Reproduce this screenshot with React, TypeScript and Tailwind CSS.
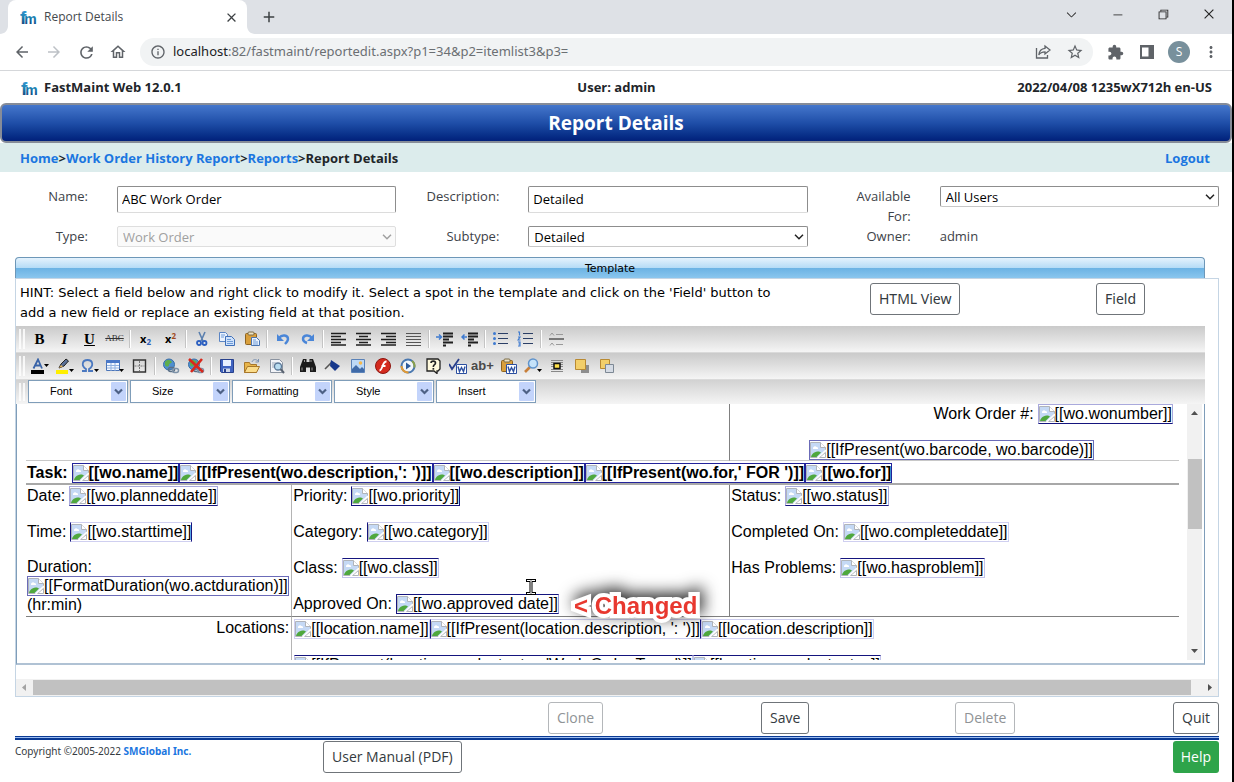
import type { ReactNode } from 'react'
import {
  MdArrowBack,
  MdArrowForward,
  MdClose,
  MdExtension,
  MdAdd,
  MdInfoOutline,
  MdMoreVert,
  MdOutlineHome,
  MdRefresh,
  MdStarBorder,
} from 'react-icons/md'
import {
  VscChevronDown,
  VscChromeClose,
  VscChromeMinimize,
  VscChromeRestore,
} from 'react-icons/vsc'

function Logo() {
  return (
    <svg width="18" height="20" viewBox="0 0 18 20" aria-label="fm">
      <defs>
        <linearGradient id="fm" x1="0" y1="0" x2="0" y2="1">
          <stop offset="0" stopColor="#3fa4e6" />
          <stop offset="0.5" stopColor="#1d7fb0" />
          <stop offset="1" stopColor="#0f2f70" />
        </linearGradient>
      </defs>
      <text
        x="0"
        y="17"
        fill="url(#fm)"
        fontFamily="Liberation Sans, sans-serif"
        fontWeight="700"
      >
        <tspan fontSize="19">f</tspan>
        <tspan fontSize="14" dx="-2">
          m
        </tspan>
      </text>
    </svg>
  )
}

function ChromeButton({ label, children }: { label: string; children: ReactNode }) {
  return (
    <button
      aria-label={label}
      className="flex h-7 w-8 shrink-0 items-center justify-center text-[#5f6368]"
    >
      {children}
    </button>
  )
}

function WindowButton({ label, children }: { label: string; children: ReactNode }) {
  return (
    <button
      aria-label={label}
      className="flex h-7 w-[46px] items-center justify-center text-[#222]"
    >
      {children}
    </button>
  )
}

function BrowserChrome() {
  return (
    <div className="border-b border-[#d5d7da]">
      <div className="flex h-[34px] justify-between bg-[#dee1e6]">
        <div className="flex items-end">
          <svg width="8" height="8" viewBox="0 0 8 8">
            <path d="M8 0v8H0c4.400 0 8-3.600 8-8z" fill="#fff" />
          </svg>
          <div className="flex h-[34px] w-[239px] items-center justify-between rounded-t-lg bg-white pr-2 pl-3">
            <div className="flex items-center gap-[6px]">
              <Logo />
              <span className="text-xs text-[#45494d]">Report Details</span>
            </div>
            <button aria-label="Close tab" className="text-[#3c4043]">
              <MdClose size={15} />
            </button>
          </div>
          <svg width="8" height="8" viewBox="0 0 8 8">
            <path d="M0 0v8h8C3.600 8 0 4.400 0 0z" fill="#fff" />
          </svg>
          <button
            aria-label="New tab"
            className="flex h-[34px] w-7 items-center justify-center text-[#3c4043]"
          >
            <MdAdd size={18} />
          </button>
        </div>
        <div className="flex">
          <WindowButton label="Search tabs">
            <VscChevronDown size={15} />
          </WindowButton>
          <WindowButton label="Minimize">
            <VscChromeMinimize size={13} />
          </WindowButton>
          <WindowButton label="Restore">
            <VscChromeRestore size={14} />
          </WindowButton>
          <WindowButton label="Close">
            <VscChromeClose size={14} />
          </WindowButton>
        </div>
      </div>

      <div className="flex h-9 items-center bg-white pr-[5px] pl-[6px]">
        <ChromeButton label="Back">
          <MdArrowBack size={18} />
        </ChromeButton>
        <ChromeButton label="Forward">
          <MdArrowForward size={18} className="text-[#bdc1c6]" />
        </ChromeButton>
        <ChromeButton label="Reload">
          <MdRefresh size={19} />
        </ChromeButton>
        <ChromeButton label="Home">
          <MdOutlineHome size={18} />
        </ChromeButton>
        <div className="mx-[6px] flex h-7 flex-1 items-center rounded-full bg-[#f1f3f4] pr-[2px] pl-[10px]">
          <MdInfoOutline size={16} className="text-[#5f6368]" />
          <span className="ml-[7px] flex-1 font-[Noto_Sans] text-[13px] text-[#6b6f73]">
            <span className="text-[#202124]">localhost</span>
            :82/fastmaint/reportedit.aspx?p1=34&amp;p2=itemlist3&amp;p3=
          </span>
          <ChromeButton label="Share">
            <svg
              width="16"
              height="16"
              viewBox="0 0 16 16"
              fill="none"
              stroke="currentColor"
              strokeWidth="1.3"
            >
              <path d="M1.500 4v10h11v-3" />
              <path d="M10 2l5 4-5 4V7.800C7 7.800 5 8.800 3.800 11 4.200 7 6.300 4.600 10 4.300z" />
            </svg>
          </ChromeButton>
          <ChromeButton label="Bookmark">
            <MdStarBorder size={18} />
          </ChromeButton>
        </div>
        <ChromeButton label="Extensions">
          <MdExtension size={17} />
        </ChromeButton>
        <ChromeButton label="Side panel">
          <svg width="14" height="14" viewBox="0 0 14 14">
            <path d="M0 0h14v14H0zM2 2.500v9h6.500v-9z" fill="currentColor" fillRule="evenodd" />
          </svg>
        </ChromeButton>
        <ChromeButton label="Profile">
          <span className="flex size-[22px] items-center justify-center rounded-full bg-[#78909c] text-xs text-white">
            S
          </span>
        </ChromeButton>
        <ChromeButton label="Menu">
          <MdMoreVert size={18} />
        </ChromeButton>
      </div>
    </div>
  )
}

function PageHeader() {
  return (
    <header className="text-[13px] font-bold text-[#212529]">
      <div className="grid h-8 grid-cols-3 items-center pt-[2px] pr-5 pl-[21px]">
        <div className="flex items-center gap-[5px]">
          <Logo />
          FastMaint Web 12.0.1
        </div>
        <div className="text-center">User: admin</div>
        <div className="text-right">2022/04/08 1235wX712h en-US</div>
      </div>
      <h1 className="flex h-10 items-center justify-center rounded-md border-2 border-[#868c98] bg-linear-to-b from-[#4577cc] via-[#1f4ea8] to-[#02207a] text-[19px] text-white">
        Report Details
      </h1>
      <nav className="flex h-[29px] items-center justify-between bg-[#dcecec] pt-[2px] pr-[22px] pl-5">
        <div>
          <a href="#home" className="text-[#1b76e0]">
            Home
          </a>
          &gt;
          <a href="#history" className="text-[#1b76e0]">
            Work Order History Report
          </a>
          &gt;
          <a href="#reports" className="text-[#1b76e0]">
            Reports
          </a>
          &gt;Report Details
        </div>
        <a href="#logout" className="text-[#1b76e0]">
          Logout
        </a>
      </nav>
    </header>
  )
}

function FormRow({ id, label, children }: { id: string; label: string; children: ReactNode }) {
  return (
    <div className="flex items-start pr-[15px]">
      <label
        htmlFor={id}
        className="w-[88px] shrink-0 pl-3 text-right leading-5 text-[#3d4248]"
      >
        {label}
      </label>
      <div className="ml-[29px] flex-1">{children}</div>
    </div>
  )
}

function TextInput({ id, value }: { id: string; value: string }) {
  return (
    <input
      id={id}
      type="text"
      defaultValue={value}
      className="block h-[27px] w-full rounded-xs border border-[#8d8d8d] border-b-[#dcdcdc] bg-white px-1 pb-[2px] text-black"
    />
  )
}

function SelectInput({ id, value, disabled }: { id: string; value: string; disabled?: boolean }) {
  return (
    <div className="relative">
      <select
        id={id}
        disabled={disabled}
        className="block h-[21px] w-full appearance-none rounded-xs border border-[#8d8d8d] border-b-[#c8c8c8] bg-white pt-px pl-[5px] text-black disabled:border-[#dedede] disabled:bg-[#fafafa] disabled:text-[#a0a0a0]"
      >
        <option>{value}</option>
      </select>
      <svg
        width="10"
        height="6"
        viewBox="0 0 10 6"
        fill="none"
        stroke={disabled ? '#a0a0a0' : '#222'}
        strokeWidth="1.500"
        className="pointer-events-none absolute top-2 right-1"
      >
        <path d="M1 0.800l4 4 4-4" />
      </svg>
    </div>
  )
}

function ReportForm() {
  return (
    <form className="-mr-[2px] grid grid-cols-3 gap-y-[13px] pt-[14px] pb-[10px] text-[13px]">
      <FormRow id="name" label="Name:">
        <TextInput id="name" value="ABC Work Order" />
      </FormRow>
      <FormRow id="description" label="Description:">
        <TextInput id="description" value="Detailed" />
      </FormRow>
      <div className="-mb-[13px]">
        <FormRow id="available" label="Available For:">
          <SelectInput id="available" value="All Users" />
        </FormRow>
      </div>
      <FormRow id="type" label="Type:">
        <SelectInput id="type" value="Work Order" disabled />
      </FormRow>
      <FormRow id="subtype" label="Subtype:">
        <SelectInput id="subtype" value="Detailed" />
      </FormRow>
      <FormRow id="owner" label="Owner:">
        <output id="owner" className="leading-5 text-[#3d4248]">
          admin
        </output>
      </FormRow>
    </form>
  )
}

function OutlineButton({ children, disabled }: { children: ReactNode; disabled?: boolean }) {
  return (
    <button
      disabled={disabled}
      className="block h-8 rounded-[3px] border border-[#6f7479] bg-white px-2 text-sm text-[#343a40] disabled:border-[#b4b7ba] disabled:text-[#8f9396]"
    >
      {children}
    </button>
  )
}

/* ---- editor toolbar ---- */

function Icon({ children }: { children: ReactNode }) {
  return (
    <svg width="18" height="16" viewBox="0 0 18 16" fill="none">
      {children}
    </svg>
  )
}

const caret = <path d="M13 11h5l-2.500 3z" fill="#000" />

const page = (
  <>
    <path d="M1.500 1.500h6l2 2v7h-8z" fill="#eaf2fd" stroke="#5b85c4" />
    <path d="M7.500 5.500h6l3 3v6h-9z" fill="#cfe2fb" stroke="#3f6fb8" />
    <path d="M3 4h4M3 6h3M9 8.500h4M9 10.500h6M9 12.500h6" stroke="#6f9bd8" />
  </>
)

const clipboard = (
  <>
    <rect x="2.500" y="2.500" width="11" height="11" rx="1" fill="#d99f3c" stroke="#8d6321" />
    <rect x="5" y="1" width="6" height="3" rx="1" fill="#efe3c4" stroke="#7a6a45" />
  </>
)

const globe = (
  <>
    <circle cx="7" cy="6.500" r="5.500" fill="#4f8fd0" stroke="#396fa5" />
    <path d="M3 4c2-3 6-2 7 0-1 2-3 1-3 3s-3 2-4 0z" fill="#5fae4c" />
    <rect x="6.500" y="9.500" width="6" height="4" rx="2" stroke="#5a6f86" strokeWidth="1.500" />
    <rect x="10.500" y="10.500" width="6" height="4" rx="2" stroke="#7d92a8" strokeWidth="1.500" />
  </>
)

const dark = '#1f1f1f'

const textIcon = 'font-[Liberation_Serif] text-[15px] font-bold leading-4 text-black'

type Tool = { name: string; icon: ReactNode } | null

// null is a separator
const firstRow: Tool[] = [
  { name: 'Bold', icon: <b className={textIcon}>B</b> },
  { name: 'Italic', icon: <i className={textIcon}>I</i> },
  { name: 'Underline', icon: <u className={textIcon}>U</u> },
  {
    name: 'Strikethrough',
    icon: <s className="font-[Liberation_Serif] text-[9px] text-[#333]">ABC</s>,
  },
  null,
  {
    name: 'Subscript',
    icon: (
      <span className="text-[11px] font-bold text-black">
        x<sub className="text-[8px] text-[#2c5fb8]">2</sub>
      </span>
    ),
  },
  {
    name: 'Superscript',
    icon: (
      <span className="text-[11px] font-bold text-black">
        x<sup className="text-[8px] text-[#a04a1c]">2</sup>
      </span>
    ),
  },
  null,
  {
    name: 'Cut',
    icon: (
      <Icon>
        <path d="M6 1l4 9M12 1L8 10" stroke="#5a7fae" strokeWidth="1.600" />
        <circle cx="6" cy="12" r="2" stroke="#2c5fc0" strokeWidth="1.800" />
        <circle cx="11.500" cy="12" r="2" stroke="#2c5fc0" strokeWidth="1.800" />
      </Icon>
    ),
  },
  { name: 'Copy', icon: <Icon>{page}</Icon> },
  {
    name: 'Paste',
    icon: (
      <Icon>
        {clipboard}
        <path d="M8.500 6.500h5l3 3v5h-8z" fill="#eaf2fd" stroke="#4a74b0" />
        <path d="M10 9h3M10 11h5M10 13h5" stroke="#6f9bd8" />
      </Icon>
    ),
  },
  null,
  {
    name: 'Undo',
    icon: (
      <Icon>
        <path d="M5 7c3-4 9-3 9 1 0 2-1 3-3 5" stroke="#4a86d8" strokeWidth="2.400" />
        <path d="M3 3v7h7z" fill="#4a86d8" />
      </Icon>
    ),
  },
  {
    name: 'Redo',
    icon: (
      <Icon>
        <path d="M13 7c-3-4-9-3-9 1 0 2 1 3 4 4" stroke="#4a86d8" strokeWidth="2.400" />
        <path d="M15 3v7H8z" fill="#4a86d8" />
      </Icon>
    ),
  },
  null,
  {
    name: 'Align left',
    icon: (
      <Icon>
        <path
          d="M1 2.500h15M1 5.500h10M1 8.500h15M1 11.500h10M1 14h15"
          stroke={dark}
          strokeWidth="1.700"
        />
      </Icon>
    ),
  },
  {
    name: 'Align center',
    icon: (
      <Icon>
        <path
          d="M1 2.500h15M4 5.500h9M1 8.500h15M4 11.500h9M1 14h15"
          stroke={dark}
          strokeWidth="1.700"
        />
      </Icon>
    ),
  },
  {
    name: 'Align right',
    icon: (
      <Icon>
        <path
          d="M1 2.500h15M6 5.500h10M1 8.500h15M6 11.500h10M1 14h15"
          stroke={dark}
          strokeWidth="1.700"
        />
      </Icon>
    ),
  },
  {
    name: 'Justify',
    icon: (
      <Icon>
        <path
          d="M1 2.500h15M1 5.500h15M1 8.500h15M1 11.500h15M1 14.500h15"
          stroke="#555"
          strokeWidth="1.200"
        />
      </Icon>
    ),
  },
  null,
  {
    name: 'Indent',
    icon: (
      <Icon>
        <path d="M7 2.500h10M7 5.500h10M7 8.500h6M7 11.500h10M7 14.500h3" stroke={dark} strokeWidth="2" />
        <path d="M0 6h5M3 3.500L5.500 6 3 8.500" stroke="#3f7bd0" strokeWidth="1.500" />
      </Icon>
    ),
  },
  {
    name: 'Outdent',
    icon: (
      <Icon>
        <path d="M7 2.500h10M7 5.500h10M7 8.500h6M7 11.500h10M7 14.500h3" stroke={dark} strokeWidth="2" />
        <path d="M6 6H1M3.500 3.500L1 6l2.500 2.500" stroke="#3f7bd0" strokeWidth="1.500" />
      </Icon>
    ),
  },
  null,
  {
    name: 'Bulleted list',
    icon: (
      <Icon>
        <path d="M6 2.500h10M6 7.500h10M6 12.500h10" stroke="#2b3f66" strokeWidth="1.200" />
        <circle cx="2.500" cy="2.500" r="1.500" fill="#3f7bd0" />
        <circle cx="2.500" cy="7.500" r="1.500" fill="#3f7bd0" />
        <circle cx="2.500" cy="12.500" r="1.500" fill="#3f7bd0" />
      </Icon>
    ),
  },
  {
    name: 'Numbered list',
    icon: (
      <Icon>
        <path d="M6 2.500h10M6 7.500h10M6 12.500h10" stroke="#2b3f66" strokeWidth="1.200" />
        <path
          d="M1 1h1.500v3.500M1 6h2L1 9h2.500M1 11h2v2H1.500 3v2H1"
          stroke="#3f7bd0"
          strokeWidth="1.200"
        />
      </Icon>
    ),
  },
  null,
  {
    name: 'Horizontal rule',
    icon: (
      <Icon>
        <path d="M1 8h15" stroke="#777" strokeWidth="2" />
        <path d="M2 4.500L4 2l2 2.500M8 3.500h7M2 14.500L4 12l2 2.500M8 13.500h7" stroke="#999" />
      </Icon>
    ),
  },
]

const secondRow: Tool[] = [
  {
    name: 'Font color',
    icon: (
      <Icon>
        <path d="M2.500 10.500L7 1.500l4 9M4 7.500h5" stroke="#3a64a8" strokeWidth="1.800" />
        <path d="M0 12h13v4H0z" fill="#000" />
        <path d="M13 6h5l-2.500 3z" fill="#000" />
      </Icon>
    ),
  },
  {
    name: 'Highlight',
    icon: (
      <Icon>
        <path d="M3 10l2-4 5-5 2.500 2L8 8z" fill="#5a6f96" stroke="#222" />
        <path d="M3 10l2-3 2 1.500z" fill="#e8b45a" />
        <path d="M0 12h12v4H0z" fill="#ffef00" />
        {caret}
      </Icon>
    ),
  },
  {
    name: 'Special character',
    icon: (
      <Icon>
        <path
          d="M1 13h4v-2C0 8 1 2 6.500 2S13 8 8 11v2h4"
          stroke="#4a78c0"
          strokeWidth="1.800"
        />
        {caret}
      </Icon>
    ),
  },
  {
    name: 'Table',
    icon: (
      <Icon>
        <path d="M.5 2.500h13v10H.5z" fill="#f4f8ff" stroke="#4a74b8" />
        <path d="M0 2h14v3H0z" fill="#4a78c8" />
        <path d="M1 7.500h12M1 10h12M5 5v8M9 5v8" stroke="#8fb0e0" />
        {caret}
      </Icon>
    ),
  },
  {
    name: 'Borders',
    icon: (
      <Icon>
        <path d="M2.500 2h12v12h-12z" stroke="#333" strokeWidth="1.400" />
        <path d="M8.500 3v10M3.500 8h10" stroke="#777" strokeDasharray="2 1" />
      </Icon>
    ),
  },
  null,
  { name: 'Insert link', icon: <Icon>{globe}</Icon> },
  {
    name: 'Remove link',
    icon: (
      <Icon>
        {globe}
        <path d="M2 1l14 13M15 1L4 14" stroke="#d8281c" strokeWidth="2.600" />
      </Icon>
    ),
  },
  null,
  {
    name: 'Save template',
    icon: (
      <Icon>
        <path d="M2.500 1.500h13v13h-12l-1-1z" fill="#3f63c0" stroke="#27408c" />
        <path d="M5 2h8v6H5z" fill="#e8f0ff" />
        <path d="M5 10.500h7V14H5z" fill="#cfd8ea" />
        <path d="M6 11h2v3H6z" fill="#27408c" />
      </Icon>
    ),
  },
  {
    name: 'Open',
    icon: (
      <Icon>
        <path d="M1.500 4.500h5l1 2h6v8h-12z" fill="#e8b54a" stroke="#a8772a" />
        <path d="M4.500 8.500h12l-3 6h-12z" fill="#fbdc8a" stroke="#a8772a" />
        <path d="M9 4c1-3 4-3 6-1M15.500 1v3h-3" stroke="#7a90b0" />
      </Icon>
    ),
  },
  {
    name: 'Preview',
    icon: (
      <Icon>
        <path d="M2.500 1.500h9l3 3v10h-12z" fill="#f2f4f8" stroke="#8a93a0" />
        <path d="M4 5h4M4 7h3M4 9h3" stroke="#9aa6b8" />
        <circle cx="10" cy="8.500" r="3.500" fill="#b8dcf0" stroke="#5a7898" strokeWidth="1.300" />
        <path d="M12.500 11l3.500 4" stroke="#5a6472" strokeWidth="2" />
      </Icon>
    ),
  },
  null,
  {
    name: 'Find',
    icon: (
      <Icon>
        <path d="M4 1h3.500v3h3V1H14l3 8v5h-6V9.500H7V14H1V9z" fill="#1c1c1c" />
        <path d="M3 9.500v3M13 9.500v3M5.500 2v2M12 2v2" stroke="#9a9a9a" />
      </Icon>
    ),
  },
  {
    name: 'Clean up',
    icon: (
      <Icon>
        <path d="M1 11l7-7" stroke="#555" strokeWidth="1.600" />
        <path d="M7 2l9 6-5 5-5-5z" fill="#17388c" />
      </Icon>
    ),
  },
  {
    name: 'Image',
    icon: (
      <Icon>
        <path d="M2.500 1.500h13v13h-13z" fill="#bcd8f6" stroke="#5a82b8" />
        <path d="M3 14v-3l4-4 4 4 2-2 2 2v3z" fill="#3f6aa8" />
        <circle cx="11.500" cy="5" r="1.800" fill="#f5b74a" />
      </Icon>
    ),
  },
  {
    name: 'Flash',
    icon: (
      <Icon>
        <circle cx="9" cy="8" r="7.500" fill="#d42a1e" stroke="#8e1610" />
        <path d="M12.500 3.500C8 3.500 9 12 5.500 12.500M7.500 8h4" stroke="#fff" strokeWidth="1.800" />
      </Icon>
    ),
  },
  {
    name: 'Media',
    icon: (
      <Icon>
        <circle cx="9" cy="8" r="6.500" fill="#f2f6fb" stroke="#4a78b0" strokeWidth="2" />
        <path d="M2.500 8a6.500 6.500 0 0 0 7 6.500" stroke="#e29a35" strokeWidth="2" />
        <path d="M13 3a6.500 6.500 0 0 1 2.300 6.500" stroke="#8aa04a" strokeWidth="2" />
        <path d="M7 4.500l5 3.500-5 3.500z" fill="#2c5a9c" />
      </Icon>
    ),
  },
  {
    name: 'Help',
    icon: (
      <Icon>
        <path
          d="M3 1h11l2 2v8l-2 2h-1v2.500L10 13H3z"
          fill="#fff9dc"
          stroke="#222"
          strokeWidth="1.300"
        />
        <path
          d="M7 5c0-2.500 4.500-2.500 4.500 0C11.500 7 9.300 6.500 9.300 9"
          stroke="#222"
          strokeWidth="1.600"
        />
        <path d="M8.500 10h1.700v1.700H8.500z" fill="#222" />
      </Icon>
    ),
  },
  {
    name: 'Spelling',
    icon: (
      <Icon>
        <path d="M0 6l3 5L10 1" stroke="#2a3f8c" strokeWidth="1.800" />
        <path d="M7.500 6.500h10v9h-10z" fill="#fff" stroke="#2c4fa0" />
        <path d="M9 8.500l1.500 5 2-4 2 4 1.500-5" stroke="#2c4fa0" strokeWidth="1.400" />
      </Icon>
    ),
  },
  {
    name: 'Insert text',
    icon: <span className="font-[Liberation_Sans] text-[13px] font-bold text-[#4a4a4a]">ab+</span>,
  },
  {
    name: 'Paste from Word',
    icon: (
      <Icon>
        {clipboard}
        <path d="M7.500 6.500h10v9h-10z" fill="#fff" stroke="#2c4fa0" />
        <path d="M9 8.500l1.500 5 2-4 2 4 1.500-5" stroke="#2c4fa0" strokeWidth="1.400" />
      </Icon>
    ),
  },
  {
    name: 'Zoom',
    icon: (
      <Icon>
        <path d="M6 9l-5 5" stroke="#c87f3a" strokeWidth="2.600" />
        <circle cx="9" cy="5.500" r="4.500" fill="#c4e2fa" stroke="#5f93cc" strokeWidth="1.500" />
        {caret}
      </Icon>
    ),
  },
  {
    name: 'Page break',
    icon: (
      <Icon>
        <path
          d="M2 2.500h12M2 4.500h12M2 6.500h3M11 6.500h3M2 8.500h3M11 8.500h3M2 11.500h12M2 13.500h12"
          stroke="#888"
        />
        <path d="M5 5.500h6v5H5z" fill="#ffe14a" stroke="#111" strokeWidth="1.500" />
      </Icon>
    ),
  },
  {
    name: 'Bring forward',
    icon: (
      <Icon>
        <path d="M7 7h8v8H7z" fill="#8e8e8e" />
        <path d="M1.500 1.500h10v10h-10z" fill="#f3cf6a" stroke="#b98a32" />
      </Icon>
    ),
  },
  {
    name: 'Send backward',
    icon: (
      <Icon>
        <path d="M1.500 1.500h9v9h-9z" fill="#f3cf6a" stroke="#b98a32" />
        <path d="M6.500 6.500h8v8h-8z" fill="#d5dbe4" stroke="#7d8894" />
      </Icon>
    ),
  },
]

function Grip() {
  return (
    <div className="flex w-[11px] shrink-0 gap-[2px] py-[3px] pl-[3px]">
      <div className="w-[2px] bg-white/80" />
      <div className="w-[2px] bg-white/80" />
    </div>
  )
}

function ToolRow({ tools }: { tools: Tool[] }) {
  return (
    <div className="flex h-[27px] border-b border-[#dadada] bg-linear-to-b from-[#cacaca] to-[#f5f5f5]">
      <Grip />
      {tools.map((tool, i) =>
        tool ? (
          <button
            key={tool.name}
            aria-label={tool.name}
            className="flex w-[25px] shrink-0 items-center justify-center"
          >
            {tool.icon}
          </button>
        ) : (
          <div key={i} className="w-[6px] shrink-0 px-[2px] py-1">
            <div className="h-full w-[2px] border-l border-[#c4c4c4] bg-white" />
          </div>
        ),
      )}
    </div>
  )
}

const menus = [
  { name: 'Font', pad: 'pl-5' },
  { name: 'Size', pad: 'pl-5' },
  { name: 'Formatting', pad: 'pl-3' },
  { name: 'Style', pad: 'pl-5' },
  { name: 'Insert', pad: 'pl-5' },
]

function MenuRow() {
  return (
    <div className="flex h-6 bg-linear-to-b from-[#d2d2d2] to-[#f5f5f5]">
      <Grip />
      <div className="ml-px flex gap-[2px]">
        {menus.map(menu => (
          <div
            key={menu.name}
            className="flex h-[23px] w-[100px] border border-[#7f9db9] bg-white p-px"
          >
            <select
              aria-label={menu.name}
              className={`w-0 flex-1 appearance-none font-[Liberation_Sans] text-[11px] text-black ${menu.pad}`}
            >
              <option>{menu.name}</option>
            </select>
            <svg width="15" height="19" viewBox="0 0 15 19" className="shrink-0">
              <rect width="15" height="19" rx="1" fill="#c3d4fb" />
              <path d="M4 7.500l3.500 3.500L11 7.500" fill="none" stroke="#4d6185" strokeWidth="2.200" />
            </svg>
          </div>
        ))}
      </div>
    </div>
  )
}

/* ---- template body ---- */

function Field({ name, edge = '' }: { name: string; edge?: string }) {
  return (
    <span className={`flex h-5 items-center border bg-white ${edge || 'border-[#23239a]'}`}>
      <svg width="16" height="16" viewBox="0 0 16 16" className="shrink-0">
        <path d="M.5.5h10l5 5V9L8 15.500H.5z" fill="#c5d9f5" stroke="#b0b4ba" />
        <path d="M10.500.5v5h5" fill="#fff" stroke="#b0b4ba" />
        <path d="M3 6.500a2 2 0 0 1 3.500-1.500A1.500 1.500 0 0 1 8 7H3z" fill="#fff" />
        <path d="M1 15c1-4 4-5.500 8-5.500l2 1L6.500 15z" fill="#4fa83d" />
        <path d="M15.500 10.500v5h-6z" fill="#fff" stroke="#b0b4ba" />
        <path d="M16 8l-8.500 8" stroke="#fff" strokeWidth="1.500" />
      </svg>
      [[{name}]]
    </span>
  )
}

const soft = 'border-[#cfcff0]'
const bottom = 'border-[#a9a9dc] border-b-[#15157e]'
const top = 'border-[#c3c3ea] border-t-[#15157e]'
const side = 'border-[#cfcff0] border-x-[#15157e]'

function Line({ label, children }: { label?: string; children?: ReactNode }) {
  return (
    <div className="flex h-5 items-center whitespace-nowrap">
      {label && <span className="mr-1">{label}</span>}
      {children}
    </div>
  )
}

function TemplateBody() {
  return (
    <table className="w-full table-fixed border-separate border-spacing-0 text-left align-top text-base leading-5 text-black">
      <colgroup>
        <col className="w-[23%]" />
        <col className="w-[38%]" />
        <col className="w-[39%]" />
      </colgroup>
      <tbody className="align-top">
        <tr>
          <td colSpan={2} className="h-[57px] border-b border-[#c8c8c8] p-0" />
          <td className="border-b border-l border-b-[#c8c8c8] border-l-[#808080] p-0">
            <div className="flex flex-col items-end gap-4">
              <div className="pr-[6px]">
                <Line label="Work Order #:">
                  <Field name="wo.wonumber" edge={bottom} />
                </Line>
              </div>
              <div className="pr-[85px]">
                <Field name="IfPresent(wo.barcode, wo.barcode)" edge="border-[#6b6bb8]" />
              </div>
            </div>
          </td>
        </tr>
        <tr className="font-bold">
          <td colSpan={3} className="border-b-2 border-[#a8a8a8] p-0 pt-[2px] pl-px">
            <Line label="Task:">
              <Field name="wo.name" />
              <Field name="IfPresent(wo.description,': ')" />
              <Field name="wo.description" />
              <Field name="IfPresent(wo.for,' FOR ')" />
              <Field name="wo.for" />
            </Line>
          </td>
        </tr>
        <tr>
          <td className="border-b border-[#808080] p-px">
            <div className="flex flex-col items-start gap-4">
              <Line label="Date:">
                <Field name="wo.planneddate" edge={bottom} />
              </Line>
              <Line label="Time:">
                <Field name="wo.starttime" edge={side} />
              </Line>
              <div className="leading-[18px]">
                <div>Duration:</div>
                <Field name="FormatDuration(wo.actduration)" edge="border-[#6b6bb8]" />
                <div>(hr:min)</div>
              </div>
            </div>
          </td>
          <td className="border-b border-l border-b-[#808080] border-l-[#b4b4b4] p-px pb-[2px]">
            <div className="flex flex-col items-start gap-4">
              <Line label="Priority:">
                <Field name="wo.priority" edge="border-[#15157e] border-t-[#cfcff0]" />
              </Line>
              <Line label="Category:">
                <Field name="wo.category" edge="border-[#cfcff0] border-l-[#15157e]" />
              </Line>
              <Line label="Class:">
                <Field name="wo.class" edge={top} />
              </Line>
              <Line label="Approved On:">
                <Field name="wo.approved date" edge="border-[#15157e] border-r-[#9a9ad6]" />
              </Line>
            </div>
          </td>
          <td className="border-b border-l border-[#808080] p-px">
            <div className="flex flex-col items-start gap-4">
              <Line label="Status:">
                <Field name="wo.status" edge={bottom} />
              </Line>
              <Line label="Completed On:">
                <Field name="wo.completeddate" edge={soft} />
              </Line>
              <Line label="Has Problems:">
                <Field name="wo.hasproblem" edge={top} />
              </Line>
            </div>
          </td>
        </tr>
        <tr>
          <td className="p-px pr-[2px] text-right">Locations:</td>
          <td colSpan={2} className="border-l border-[#b4b4b4] p-0 pt-[2px] pl-[2px]">
            <div className="flex flex-col items-start gap-4">
              <Line>
                <Field name="location.name" edge={soft} />
                <Field name="IfPresent(location.description, ': ')" edge={side} />
                <Field name="location.description" edge={soft} />
              </Line>
              <Line>
                <Field name="IfPresent(location.productnotes,'Work Order Type:')" edge={top} />
                <Field name="location.productnotes" edge={top} />
              </Line>
            </div>
          </td>
        </tr>
      </tbody>
    </table>
  )
}

function Editor() {
  return (
    <div className="relative flex h-[261px] border-x border-b-2 border-[#7f9db9] border-b-[#b0c2d4] bg-white pb-[3px] font-[Liberation_Sans]">
      <div className="flex-1 overflow-hidden pr-2 pl-[9px]">
        <TemplateBody />
      </div>
      <div className="mr-[2px] flex w-[15px] flex-col items-center bg-[#f1f1f1]">
        <svg width="15" height="17" viewBox="0 0 15 17">
          <path d="M4 11l3.500-4 3.500 4z" fill="#505050" />
        </svg>
        <div className="mt-[38px] h-[70px] w-[14px] bg-[#c1c1c1]" />
        <svg width="15" height="17" viewBox="0 0 15 17" className="mt-auto">
          <path d="M4 6l3.500 4L11 6z" fill="#505050" />
        </svg>
      </div>

      <svg
        width="12"
        height="16"
        viewBox="0 0 12 16"
        fill="none"
        className="absolute top-[175px] left-[508px]"
      >
        <path
          d="M1 1.500h4l1 .5 1-.5h4M1 14.500h4l1-.5 1 .5h4M6 2v12"
          stroke="#000"
          strokeWidth="3"
        />
        <path d="M2 1.500h3l1 .5 1-.5h3M2 14.500h3l1-.5 1 .5h3M6 2v12" stroke="#fff" />
      </svg>
      <div className="absolute top-[186px] left-[557px] text-2xl leading-8 font-bold whitespace-nowrap text-[#e8382f] drop-shadow-[3px_-4px_8px_rgba(0,0,0,0.85)] [-webkit-text-stroke:8px_white] [paint-order:stroke_fill] [stroke-linejoin:round]">
        &lt; Changed
      </div>
    </div>
  )
}

function TemplatePanel() {
  return (
    <section className="mr-[13px] ml-[15px]">
      <h2 className="mr-[14px] flex h-[21px] items-center justify-center rounded-t-sm border border-b-0 border-[#6d97b8] bg-[linear-gradient(#e4f2fd,#b4dbf6_50%,#6cb3e4_52%,#8ac6ee)] pt-[3px] font-[DejaVu_Sans] text-[11px] text-black">
        Template
      </h2>
      <div className="border border-[#c5d5e4]">
        <div className="grid grid-cols-[854fr_226fr_122fr] items-start pt-1 pb-[3px]">
          <p className="pl-1 font-[DejaVu_Sans] text-[13px] leading-5 text-black">
            HINT: Select a field below and right click to modify it. Select a spot in the
            template and click on the 'Field' button to
            <br />
            add a new field or replace an existing field at that position.
          </p>
          <div className="font-[Noto_Sans]">
            <OutlineButton>HTML View</OutlineButton>
          </div>
          <div className="font-[Noto_Sans]">
            <OutlineButton>Field</OutlineButton>
          </div>
        </div>
        <div className="mr-[13px]">
          <ToolRow tools={firstRow} />
          <ToolRow tools={secondRow} />
          <MenuRow />
          <Editor />
        </div>
        <div className="mt-[14px] flex h-[17px] items-center justify-between bg-[#f1f1f1]">
          <svg width="17" height="17" viewBox="0 0 17 17">
            <path d="M10 5L6 8.500l4 3.500z" fill="#a3a3a3" />
          </svg>
          <div className="mr-[10px] h-[15px] flex-1 bg-[#c1c1c1]" />
          <svg width="17" height="17" viewBox="0 0 17 17">
            <path d="M7 5l4 3.500L7 12z" fill="#505050" />
          </svg>
        </div>
      </div>
    </section>
  )
}

function Footer() {
  return (
    <footer className="mr-[13px] ml-[15px]">
      <div className="grid grid-cols-[533fr_213fr_194fr_264fr] pt-[5px] pb-[2px]">
        <div />
        <div>
          <OutlineButton disabled>Clone</OutlineButton>
        </div>
        <div>
          <OutlineButton>Save</OutlineButton>
        </div>
        <div className="flex justify-between">
          <OutlineButton disabled>Delete</OutlineButton>
          <OutlineButton>Quit</OutlineButton>
        </div>
      </div>
      <div className="h-1 border-t border-b-2 border-[#0a3a94] bg-[#9dbdf0]" />
      <div className="grid grid-cols-[308fr_896fr] pt-px">
        <div className="font-[Noto_Sans] text-[10px] leading-5 text-[#343a40]">
          Copyright ©2005-2022{' '}
          <a href="#smglobal" className="font-bold text-[#1b76e0]">
            SMGlobal Inc.
          </a>
        </div>
        <div className="flex justify-between">
          <OutlineButton>User Manual (PDF)</OutlineButton>
          <button className="h-8 rounded-[3px] bg-[#2ea44a] px-2 text-sm text-white">Help</button>
        </div>
      </div>
    </footer>
  )
}

export default function App() {
  return (
    <div className="min-h-screen overflow-x-hidden border-r-2 border-black bg-white font-['Open_Sans','Noto_Sans',sans-serif]">
      <BrowserChrome />
      <PageHeader />
      <ReportForm />
      <TemplatePanel />
      <Footer />
    </div>
  )
}
